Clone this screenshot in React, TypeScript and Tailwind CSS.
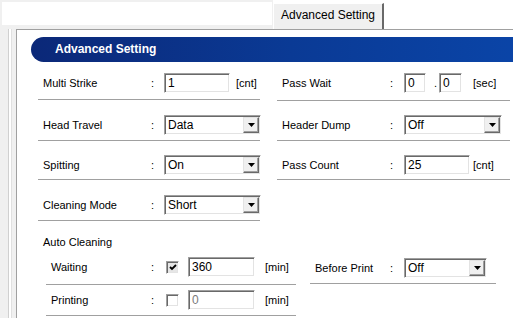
import React from "react";

const sunken =
  "border border-t-[#a0a0a0] border-l-[#a0a0a0] border-b-white border-r-white shadow-[inset_1px_1px_0_#696969,inset_-1px_-1px_0_#e3e3e3]";

function TextBox({ value, className, disabled }: { value: string; className: string; disabled?: boolean }) {
  return (
    <div
      className={`flex h-[20px] items-center bg-white pl-[3px] text-[12px] ${sunken} ${className} ${
        disabled ? "text-[#7a7a7a]" : "text-black"
      }`}
    >
      {value}
    </div>
  );
}

function Combo({ value, className }: { value: string; className: string }) {
  return (
    <div className={`flex h-[20px] items-center bg-white text-[12px] ${sunken} ${className}`}>
      <span className="flex-1 pl-[3px]">{value}</span>
      <div className="mr-[1px] flex h-[16px] w-[16px] items-center justify-center border border-t-[#e3e3e3] border-l-[#e3e3e3] border-b-[#696969] border-r-[#696969] bg-[#f0f0f0] shadow-[inset_-1px_-1px_0_#a0a0a0]">
        <svg width="7" height="4" viewBox="0 0 7 4">
          <polygon points="0,0 7,0 3.5,4" fill="#000" />
        </svg>
      </div>
    </div>
  );
}

function Check({ checked }: { checked?: boolean }) {
  return (
    <div
      className={`flex h-[13px] w-[13px] items-center justify-center ${sunken} ${
        checked ? "bg-[#e6e6e6]" : "bg-white"
      }`}
    >
      {checked && (
        <svg width="8" height="7" viewBox="0 0 8 7">
          <path d="M1 3 L3 5 L7 1" stroke="#000" strokeWidth="1.8" fill="none" />
        </svg>
      )}
    </div>
  );
}

function Row({
  label,
  className,
  labelW,
  colonW,
  children,
}: {
  label: string;
  className: string;
  labelW: string;
  colonW: string;
  children: React.ReactNode;
}) {
  return (
    <div className={`flex items-center border-b border-[#a0a0a0] ${className}`}>
      <div className={`shrink-0 pl-[5px] ${labelW}`}>{label}</div>
      <div className={`shrink-0 ${colonW}`}>:</div>
      {children}
    </div>
  );
}

export default function App() {
  return (
    <div className="flex h-[335px] w-[513px] flex-col overflow-hidden bg-white font-['Liberation_Sans',Arial,sans-serif] text-[11px] leading-[13px] text-black">
      {/* tab strip */}
      <div className="flex h-[29px] shrink-0">
        <div className="h-full w-[273px] bg-[#f0f0f0] pl-[2px] pt-[2px]">
          <div className="h-[23px] w-[270px] bg-white" />
        </div>
        <div className="mt-[3px] flex h-[26px] w-[111px] items-center justify-center border-l border-t border-r-2 border-l-white border-t-white border-r-[#696969] bg-[#f0f0f0] pb-[2px] text-[12px]">
          Advanced Setting
        </div>
        <div className="flex-1 bg-white" />
      </div>

      {/* body */}
      <div className="flex h-[289px] shrink-0">
        <div className="flex w-[16px] shrink-0 bg-[#f0f0f0]">
          <div className="w-[8px]" />
          <div className="w-[1px] bg-[#d0d0d0]" />
          <div className="w-[2px] bg-white" />
          <div className="w-[1px] bg-[#e0e0e0]" />
        </div>
        <div className="flex-1 overflow-hidden border-l border-t border-[#a0a0a0] bg-white">
          <div className="ml-[14px] mt-[7px] flex h-[25px] w-[520px] items-center rounded-l-full bg-gradient-to-r from-[#0b2878] via-[#0a3a95] to-[#0a46aa] pl-[24px] text-[12px] font-bold text-white">
            Advanced Setting
          </div>

          <div className="ml-[21px] flex">
            {/* left column */}
            <div className="w-[222px] shrink-0">
              <Row label="Multi Strike" className="pb-[6px] pt-[11px]" labelW="w-[113px]" colonW="w-[13px]">
                <TextBox value="1" className="w-[66px]" />
                <span className="ml-[6px]">[cnt]</span>
              </Row>
              <Row label="Head Travel" className="pb-[5px] pt-[15px]" labelW="w-[113px]" colonW="w-[13px]">
                <Combo value="Data" className="w-[97px] shrink-0" />
              </Row>
              <Row label="Spitting" className="pb-[4px] pt-[14px]" labelW="w-[113px]" colonW="w-[13px]">
                <Combo value="On" className="w-[97px] shrink-0" />
              </Row>
              <Row label="Cleaning Mode" className="pb-[5px] pt-[15px]" labelW="w-[113px]" colonW="w-[13px]">
                <Combo value="Short" className="w-[97px] shrink-0" />
              </Row>
            </div>

            {/* right column */}
            <div className="ml-[17px] w-[233px] shrink-0">
              <Row label="Pass Wait" className="pb-[7px] pt-[11px]" labelW="w-[113px]" colonW="w-[14px]">
                <TextBox value="0" className="w-[22px]" />
                <span className="ml-[8px] w-[5px]">.</span>
                <TextBox value="0" className="w-[23px]" />
                <span className="ml-[11px]">[sec]</span>
              </Row>
              <Row label="Header Dump" className="pb-[5px] pt-[14px]" labelW="w-[113px]" colonW="w-[14px]">
                <Combo value="Off" className="w-[98px]" />
              </Row>
              <Row label="Pass Count" className="pb-[4px] pt-[14px]" labelW="w-[113px]" colonW="w-[14px]">
                <TextBox value="25" className="w-[66px]" />
                <span className="ml-[3px]">[cnt]</span>
              </Row>
            </div>
          </div>

          {/* auto cleaning */}
          <div className="ml-[21px] pl-[5px] pt-[15px]">Auto Cleaning</div>
          <div className="ml-[29px] mt-[1px] flex items-start">
            <div className="w-[250px] shrink-0">
              <Row label="Waiting" className="pb-[7px] pt-[7px]" labelW="w-[105px]" colonW="w-[15px]">
                <Check checked />
                <TextBox value="360" className="ml-[9px] w-[67px]" />
                <span className="ml-[10px]">[min]</span>
              </Row>
              <Row label="Printing" className="pb-[5px] pt-[5px]" labelW="w-[105px]" colonW="w-[15px]">
                <Check />
                <TextBox value="0" className="ml-[9px] w-[67px]" disabled />
                <span className="ml-[10px]">[min]</span>
              </Row>
            </div>
            <div className="ml-[14px] w-[186px] shrink-0">
              <Row label="Before Print" className="pb-[5px] pt-[8px]" labelW="w-[80px]" colonW="w-[14px]">
                <Combo value="Off" className="w-[83px]" />
              </Row>
            </div>
          </div>
        </div>
      </div>
      <div className="flex-1 bg-white" />
    </div>
  );
}
